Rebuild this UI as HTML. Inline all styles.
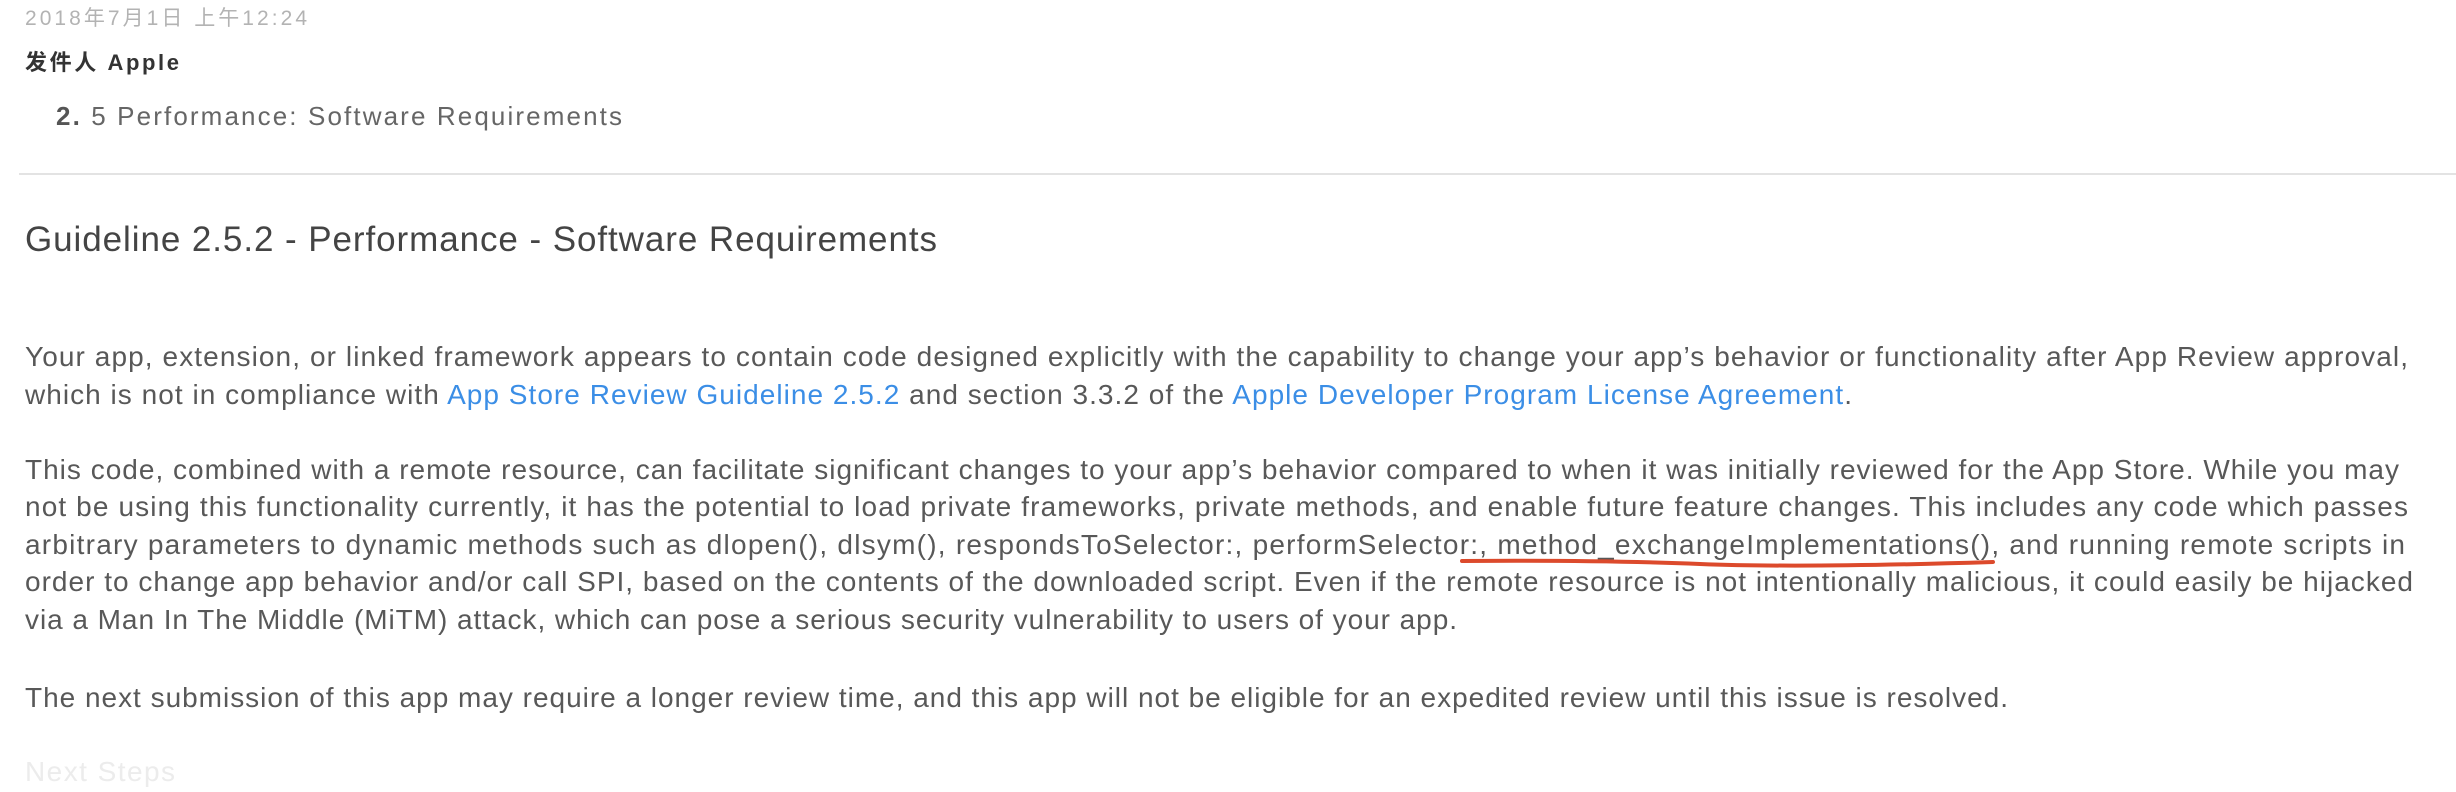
<!DOCTYPE html>
<html><head><meta charset="utf-8"><style>
body{margin:0;width:2456px;height:786px;background:#fff;overflow:hidden;position:relative;font-family:"Liberation Sans","Noto Sans CJK SC",sans-serif;color:#585858}
.l{position:absolute;white-space:nowrap;left:25px;height:40px;line-height:40px}
.b{font-size:28px}
a{color:#3b8ee6;text-decoration:none}
</style></head><body>
<div class="l" style="top:-1px;font-size:21px;color:#b3b3b3" data-w="282">2018年7月1日 上午12:24</div>
<div class="l" style="top:43px;font-size:22px;color:#333;font-weight:bold" data-w="154">发件人 Apple</div>
<div class="l" style="top:96px;left:56px;font-size:26px;color:#666" data-w="566"><b style="color:#555">2.</b> 5 Performance: Software Requirements</div>
<div style="position:absolute;left:19px;right:0;top:173px;height:2px;background:#e3e3e3"></div>
<div class="l" style="top:220px;font-size:35px;color:#444" data-w="912">Guideline 2.5.2 - Performance - Software Requirements</div>
<div class="l b" style="top:337px" data-w="2383">Your app, extension, or linked framework appears to contain code designed explicitly with the capability to change your app’s behavior or functionality after App Review approval,</div>
<div class="l b" style="top:375px" data-w="1827">which is not in compliance with <a>App Store Review Guideline 2.5.2</a> and section 3.3.2 of the <a>Apple Developer Program License Agreement</a>.</div>
<div class="l b" style="top:450px" data-w="2374">This code, combined with a remote resource, can facilitate significant changes to your app’s behavior compared to when it was initially reviewed for the App Store. While you may</div>
<div class="l b" style="top:487px" data-w="2383">not be using this functionality currently, it has the potential to load private frameworks, private methods, and enable future feature changes. This includes any code which passes</div>
<div class="l b" style="top:525px" data-w="2380">arbitrary parameters to dynamic methods such as dlopen(), dlsym(), respondsToSelector:, performSelector:, method_exchangeImplementations(), and running remote scripts in</div>
<div class="l b" style="top:562px" data-w="2388">order to change app behavior and/or call SPI, based on the contents of the downloaded script. Even if the remote resource is not intentionally malicious, it could easily be hijacked</div>
<div class="l b" style="top:600px" data-w="1432">via a Man In The Middle (MiTM) attack, which can pose a serious security vulnerability to users of your app.</div>
<div class="l b" style="top:678px" data-w="1983">The next submission of this app may require a longer review time, and this app will not be eligible for an expedited review until this issue is resolved.</div>
<div class="l b" style="top:752px;color:#ececec" data-w="150">Next Steps</div>
<svg style="position:absolute;left:0;top:0" width="2456" height="786"><path d="M1462 561 Q1600 560 1700 564 T1993 562" stroke="#dc4a2c" stroke-width="4" fill="none" stroke-linecap="round"/></svg>
<script>
document.querySelectorAll('.l[data-w]').forEach(function(e){
var t=+e.dataset.w;var r=document.createRange();r.selectNodeContents(e);
var w=r.getBoundingClientRect().width;var n=e.textContent.length-1;
if(n>0)e.style.letterSpacing=((t-w)/n)+'px';});
</script>
</body></html>
